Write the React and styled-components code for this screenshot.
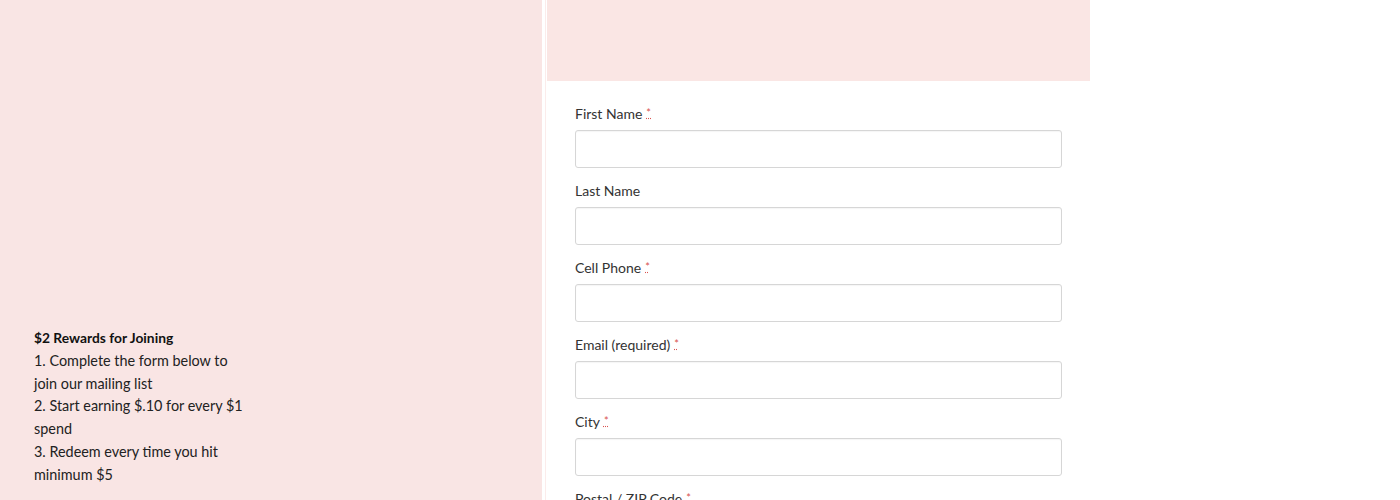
import React from "react";
import styled, { createGlobalStyle } from "styled-components";

const Global = createGlobalStyle`
  html, body { margin: 0; padding: 0; background: #ffffff; }
  body { font-family: "Lato", "Open Sans", sans-serif; color: #333333; }
  * { box-sizing: border-box; }
`;

const Page = styled.div`
  display: flex;
  align-items: stretch;
  width: 1400px;
  min-height: 500px;
`;

const SidePanel = styled.aside`
  width: 543px;
  flex: none;
  background: #f9e5e4;
  padding: 327px 0 0 34px;
  border-right: 1px solid #ffffff;
  box-shadow: 2px 0 0 #ffffff, 3px 0 0 #fbeceb;
`;

const Intro = styled.div`
  font-size: 14.4px;
  line-height: 22.8px;
  color: #222222;
`;

const IntroLine = styled.div`
  white-space: nowrap;
`;

const IntroTitle = styled(IntroLine)`
  font-weight: 700;
  font-size: 13.8px;
  color: #111111;
`;

const FormColumn = styled.section`
  width: 543px;
  flex: none;
  margin-left: 4px;
  display: flex;
  flex-direction: column;
`;

const Banner = styled.div`
  height: 81px;
  background: #fae6e4;
`;

const Form = styled.form`
  display: flex;
  flex-direction: column;
  gap: 14px;
  padding: 24px 28px 0 28px;
`;

const Field = styled.div`
  display: flex;
  flex-direction: column;
  gap: 7px;
`;

const Label = styled.label`
  display: block;
  height: 18px;
  font-size: 14px;
  line-height: 18px;
  color: #333333;
`;

const Req = styled.abbr`
  color: #d9534f;
  font-size: 11px;
  line-height: 1;
  margin-left: 4px;
  text-decoration: underline dotted;
  position: relative;
  top: -2px;
  cursor: help;
`;

const Input = styled.input`
  display: block;
  height: 38px;
  width: 487px;
  margin: 0;
  border: 1px solid #d6d6d6;
  border-radius: 3px;
  background: #ffffff;
  box-shadow: inset 0 1px 1px rgba(0, 0, 0, 0.04);
  font: inherit;
  padding: 0 10px;
`;

const fields = [
  { label: "First Name", req: true },
  { label: "Last Name", req: false },
  { label: "Cell Phone", req: true },
  { label: "Email (required)", req: true },
  { label: "City", req: true },
  { label: "Postal / ZIP Code", req: true },
];

const introLines = [
  "1. Complete the form below to",
  "join our mailing list",
  "2. Start earning $.10 for every $1",
  "spend",
  "3. Redeem every time you hit",
  "minimum $5",
];

export default function App() {
  return (
    <>
      <Global />
      <Page>
        <SidePanel>
          <Intro>
            <IntroTitle>$2 Rewards for Joining</IntroTitle>
            {introLines.map((l) => (
              <IntroLine key={l}>{l}</IntroLine>
            ))}
          </Intro>
        </SidePanel>
        <FormColumn>
          <Banner />
          <Form onSubmit={(e) => e.preventDefault()}>
            {fields.map((f) => (
              <Field key={f.label}>
                <Label>
                  {f.label}
                  {f.req && <Req title="required">*</Req>}
                </Label>
                <Input type="text" />
              </Field>
            ))}
          </Form>
        </FormColumn>
      </Page>
    </>
  );
}
